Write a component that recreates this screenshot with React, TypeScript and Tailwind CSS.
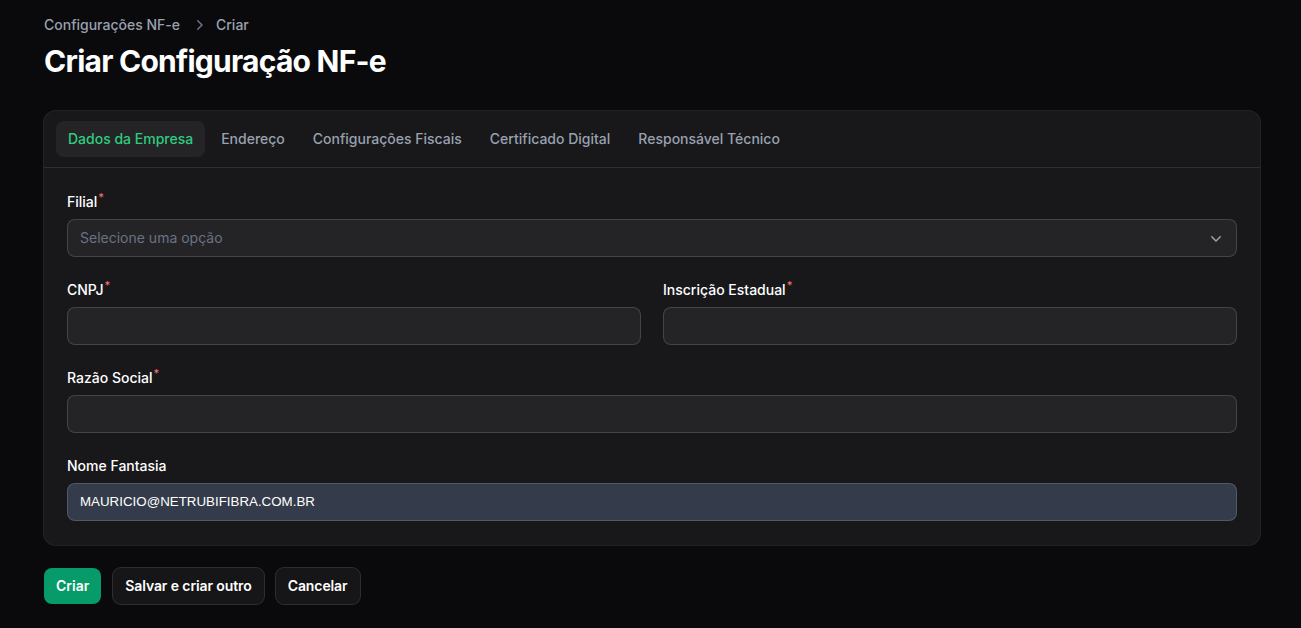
import React from 'react';

function Label(props: { children: React.ReactNode; required?: boolean }) {
  return (
    <label className="mb-[7px] flex h-5 items-start text-sm font-medium leading-5 text-white">
      {props.children}
      {props.required ? <sup className="ml-px mt-[5px] text-[11px] font-medium leading-none text-[#f87171]">*</sup> : null}
    </label>
  );
}

function TextInput(props: { value?: string }) {
  return (
    <input
      readOnly
      defaultValue={props.value ?? ''}
      className="h-[38px] w-full rounded-lg border border-white/15 bg-[#242427] px-3 text-sm text-white outline-none"
    />
  );
}

function Field(props: { label: string; required?: boolean; children: React.ReactNode }) {
  return (
    <div className="flex flex-col">
      <Label required={props.required}>{props.label}</Label>
      {props.children}
    </div>
  );
}

const tabs = ['Dados da Empresa', 'Endereço', 'Configurações Fiscais', 'Certificado Digital', 'Responsável Técnico'];

export default function App() {
  return (
    <div className="min-h-screen bg-[#0a0a0c] pl-[44px] pr-[41px] pt-[15px] font-['Inter',sans-serif]">
      {/* breadcrumbs */}
      <nav className="flex h-5 items-center text-sm font-medium text-gray-400">
        <span>Configurações NF-e</span>
        <svg viewBox="0 0 20 20" fill="currentColor" className="ml-[9px] mr-[7px] h-5 w-5 text-gray-500">
          <path
            fillRule="evenodd"
            d="M8.22 5.22a.75.75 0 0 1 1.06 0l4.25 4.25a.75.75 0 0 1 0 1.06l-4.25 4.25a.75.75 0 0 1-1.06-1.06L11.94 10 8.22 6.28a.75.75 0 0 1 0-1.06Z"
            clipRule="evenodd"
          />
        </svg>
        <span>Criar</span>
      </nav>

      <h1 className="mt-[8px] text-3xl font-bold leading-9 tracking-tight text-white">Criar Configuração NF-e</h1>

      <div className="mt-8 rounded-xl bg-[#18181b] ring-1 ring-white/10">
        <div className="flex gap-x-1 border-b border-white/10 px-3 py-2.5">
          {tabs.map((t, i) => (
            <div
              key={t}
              className={
                i === 0
                  ? 'flex h-9 items-center rounded-lg bg-white/5 px-3 text-sm font-medium text-[#2ecc7f]'
                  : 'flex h-9 items-center rounded-lg px-3 text-sm font-medium text-gray-400'
              }
            >
              {t}
            </div>
          ))}
        </div>

        <div className="flex flex-col gap-[23px] px-[23px] pb-6 pt-6">
          <Field label="Filial" required>
            <div className="flex h-[38px] w-full items-center justify-between rounded-lg border border-white/15 bg-[#242427] pl-3 pr-2.5">
              <span className="text-sm text-gray-500">Selecione uma opção</span>
              <svg viewBox="0 0 20 20" fill="currentColor" className="h-5 w-5 text-gray-400">
                <path
                  fillRule="evenodd"
                  d="M5.22 8.22a.75.75 0 0 1 1.06 0L10 11.94l3.72-3.72a.75.75 0 1 1 1.06 1.06l-4.25 4.25a.75.75 0 0 1-1.06 0L5.22 9.28a.75.75 0 0 1 0-1.06Z"
                  clipRule="evenodd"
                />
              </svg>
            </div>
          </Field>

          <div className="grid grid-cols-2 gap-[22px]">
            <Field label="CNPJ" required>
              <TextInput />
            </Field>
            <Field label="Inscrição Estadual" required>
              <TextInput />
            </Field>
          </div>

          <Field label="Razão Social" required>
            <TextInput />
          </Field>

          <Field label="Nome Fantasia">
            <div className="flex h-[38px] w-full items-center rounded-lg border border-white/15 bg-[#343b4a] px-3 font-['Liberation_Sans',Arial,sans-serif] text-[13.33px] text-white">
              MAURICIO@NETRUBIFIBRA.COM.BR
            </div>
          </Field>
        </div>
      </div>

      <div className="mt-[23px] flex gap-3">
        <button className="h-9 rounded-lg bg-[#069b68] px-3 text-sm font-semibold text-white">Criar</button>
        <button className="h-9 rounded-lg bg-white/5 px-3 text-sm font-semibold tracking-[-0.1px] text-white ring-1 ring-white/15">
          Salvar e criar outro
        </button>
        <button className="h-9 rounded-lg bg-white/5 px-3 text-sm font-semibold tracking-[-0.1px] text-white ring-1 ring-white/15">
          Cancelar
        </button>
      </div>
    </div>
  );
}
